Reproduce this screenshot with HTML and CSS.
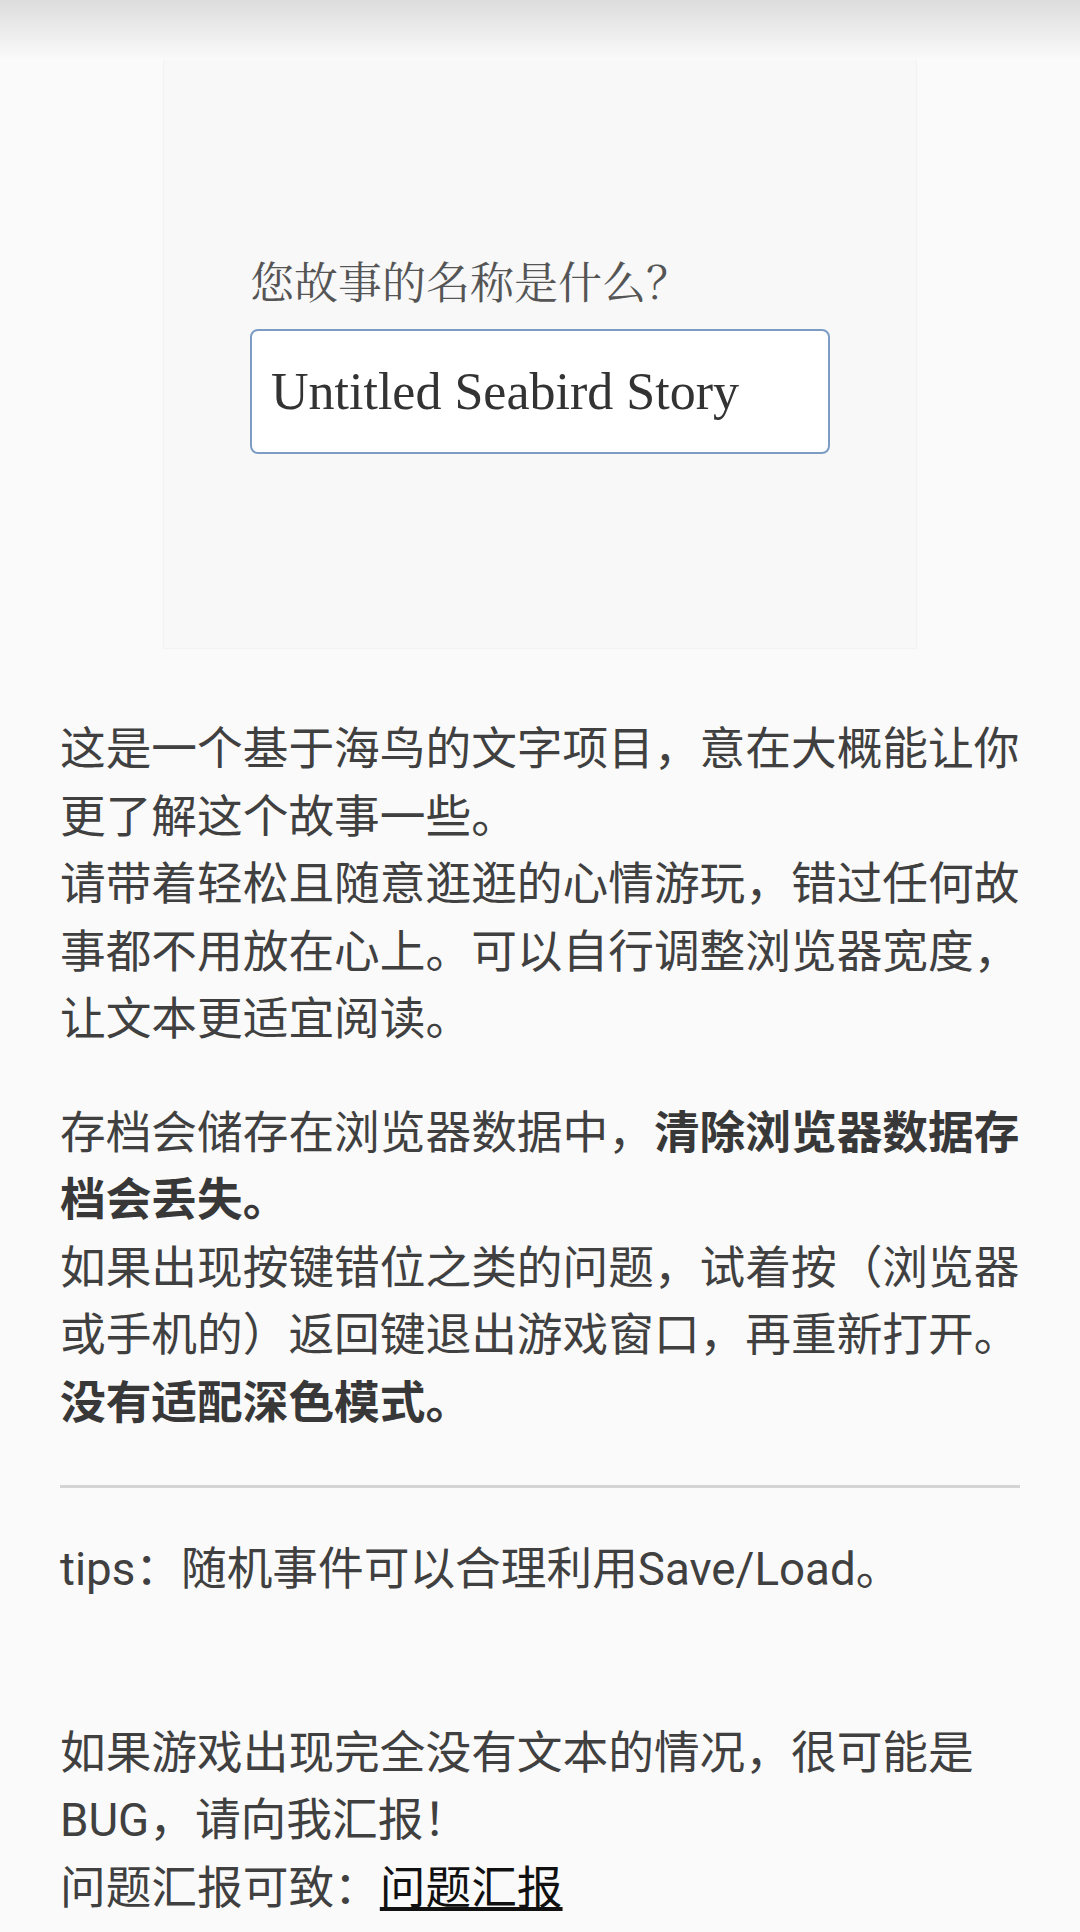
FILE: index.html
```html
<!DOCTYPE html>
<html lang="zh-CN">
<head>
    <meta charset="UTF-8">
    <meta name="viewport" content="width=device-width, initial-scale=1.0">
    <title>海鸟</title>
    <link rel="stylesheet" href="styles.css">
</head>
<body>
    <div class="top-shade"></div>
    <div class="game-frame">
        <div class="prompt">
            <label for="storyName">您故事的名称是什么？</label>
            <input id="storyName" type="text" value="Untitled Seabird Story">
        </div>
    </div>
    <div class="content">
        <p>这是一个基于海鸟的文字项目，意在大概能让你更了解这个故事一些。<br>请带着轻松且随意逛逛的心情游玩，错过任何故事都不用放在心上。可以自行调整浏览器宽度，让文本更适宜阅读。</p>
        <p>存档会储存在浏览器数据中，<b>清除浏览器数据存档会丢失。</b><br>如果出现按键错位之类的问题，试着按（浏览器或手机的）返回键退出游戏窗口，再重新打开。<br><b>没有适配深色模式。</b></p>
        <hr>
        <p class="tips">tips：随机事件可以合理利用Save/Load。</p>
        <p>如果游戏出现完全没有文本的情况，很可能是BUG，请向我汇报！<br>问题汇报可致：<a href="#">问题汇报</a></p>
    </div>
</body>
</html>
```

FILE: styles.css
```css
body {
    margin: 0;
    background-color: #fafafa;
    color: #404040;
    font-family: Roboto, "Noto Sans CJK SC", sans-serif;
}
.top-shade {
    height: 60px;
    background: linear-gradient(#dcdcdc, #fafafa);
}
.game-frame {
    width: 752px;
    height: 588px;
    margin: 0 auto;
    background: #f8f8f8;
    border: 1px solid #f2f2f2;
    border-top: none;
    display: flex;
    justify-content: center;
    align-items: center;
}
.prompt {
    display: flex;
    flex-direction: column;
    gap: 23px;
}
.prompt label {
    font-family: "Noto Serif CJK SC", "Noto Sans CJK SC", serif;
    font-size: 44px;
    line-height: 52px;
    color: #555;
}
.prompt input {
    box-sizing: border-box;
    width: 580px;
    height: 125px;
    padding: 0 19px;
    border: 2px solid #7d9cc4;
    border-radius: 8px;
    background: #fff;
    font-family: "Liberation Serif", serif;
    font-size: 52px;
    color: #333;
    outline: none;
}
.content {
    padding: 21px 60px 0;
}
.content p {
    margin: 46px 0;
    font-size: 45.7px;
    line-height: 1.477;
}
.content b {
    font-weight: 700;
    color: #383838;
}
.content hr {
    height: 0;
    margin: 48px 0;
    border: none;
    border-top: 3px solid #d4d4d4;
}
.content p.tips {
    margin-bottom: 116px;
}
.content a {
    color: #111;
    text-decoration: underline;
}
```
